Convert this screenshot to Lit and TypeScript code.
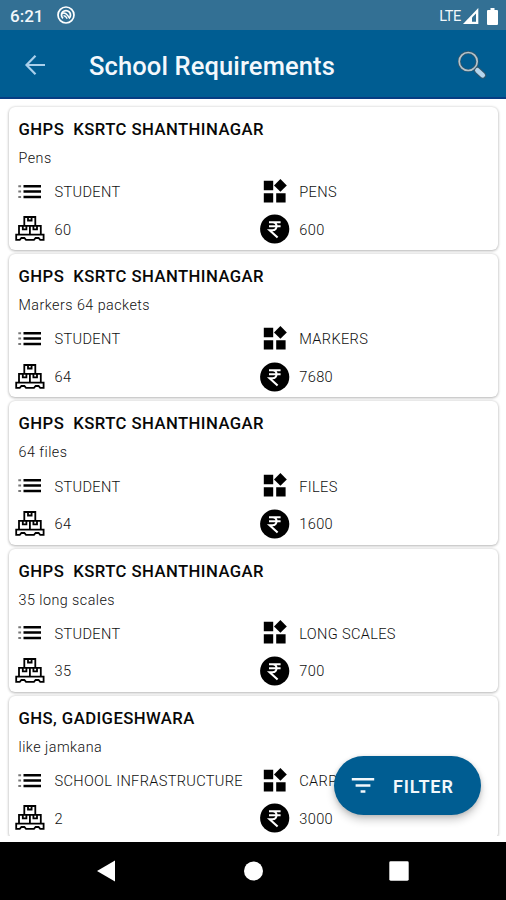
import { LitElement, html, css, svg } from "lit";
import { customElement, property } from "lit/decorators.js";

interface Requirement {
  school: string;
  note: string;
  category: string;
  item: string;
  quantity: number;
  cost: number;
}

const REQUIREMENTS: Requirement[] = [
  { school: "GHPS  KSRTC SHANTHINAGAR", note: "Pens", category: "STUDENT", item: "PENS", quantity: 60, cost: 600 },
  { school: "GHPS  KSRTC SHANTHINAGAR", note: "Markers 64 packets", category: "STUDENT", item: "MARKERS", quantity: 64, cost: 7680 },
  { school: "GHPS  KSRTC SHANTHINAGAR", note: "64 files", category: "STUDENT", item: "FILES", quantity: 64, cost: 1600 },
  { school: "GHPS  KSRTC SHANTHINAGAR", note: "35 long scales", category: "STUDENT", item: "LONG SCALES", quantity: 35, cost: 700 },
  { school: "GHS, GADIGESHWARA", note: "like jamkana", category: "SCHOOL INFRASTRUCTURE", item: "CARPET", quantity: 2, cost: 3000 },
];

const icon = (w: number, h: number, body: unknown) =>
  html`<svg width=${w} height=${h} viewBox="0 0 ${w} ${h}" fill="none">${body}</svg>`;

const listIcon = icon(30, 30, svg`
  <path d="M3.3 9.2h2.8M3.3 14.6h2.8M3.3 20h2.8" stroke="#777" stroke-width="2"/>
  <path d="M8.5 9.2H26M8.5 14.6H26M8.5 20H26" stroke="#000" stroke-width="2.5"/>`);

const palletIcon = icon(30, 30, svg`
  <g stroke="#000" stroke-width="1.8">
    <path d="M9.3 11V3h11v8M13 3v3.5h3.6V3"/>
    <path d="M4 20V11.8h21.8V20M14.9 11.8V20M7.8 11.8v3.6h3.6v-3.6M18.4 11.8v3.6H22v-3.6"/>
    <path d="M1.2 20.6h27.4v5.2h-3.4L23.6 24h-3L19 25.800h-8L9.400 24h-3l-1.600 1.800H1.200z"/>
  </g>`);

const widgetsIcon = icon(30, 30, svg`
  <g fill="#000">
    <path d="M3.8 3.8h9.4v9.4H3.8zM3.8 16.2h9.4v9.4H3.8zM16.2 16.2h9.4v9.4h-9.4z"/>
    <path d="M20.4 2l6.4 6.4-6.4 6.4L14 8.400z"/>
  </g>`);

const rupeeIcon = icon(30, 30, svg`
  <circle cx="14.7" cy="15" r="14.6" fill="#000"/>
  <path d="M9 8.300h11.600M9 12.200h11.600M9 8.300h3.500c5.400 0 5.400 7.900 0 7.900H9.600l8 7.400" stroke="#fff" stroke-width="2.1"/>`);

@customElement("requirement-card")
export class RequirementCard extends LitElement {
  @property({ attribute: false }) data!: Requirement;

  static styles = css`
    :host {
      display: block;
      box-sizing: border-box;
      height: 143.2px;
      padding: 12px 0 0 6px;
      border-radius: 6px;
      background: #fff;
      box-shadow: 0 1px 3px rgba(0, 0, 0, 0.24), 0 0 3px rgba(0, 0, 0, 0.14);
      white-space: pre;
    }
    .school {
      padding-left: 3.5px;
      font-size: 16.7px;
      font-weight: 500;
      line-height: 22px;
      letter-spacing: 0.43px;
      color: #080808;
    }
    .note {
      padding-left: 3.5px;
      margin-top: 7px;
      font-size: 14.3px;
      font-weight: 300;
      line-height: 20px;
      letter-spacing: 0.47px;
      color: #101010;
    }
    .facts {
      display: grid;
      grid-template-columns: 244.8px 1fr;
      grid-auto-rows: 37.6px;
      align-items: center;
      margin-top: 5px;
    }
    .fact {
      display: flex;
      align-items: center;
      gap: 9.5px;
      font-size: 14.6px;
      font-weight: 300;
      letter-spacing: 0.32px;
      color: #101010;
    }
    .fact span {
      padding-top: 1px;
    }
    svg {
      display: block;
      flex: none;
    }
  `;

  render() {
    const d = this.data;
    return html`<div class="school">${d.school}</div><div class="note">${d.note}</div><div class="facts"
      ><div class="fact">${listIcon}<span>${d.category}</span></div
      ><div class="fact">${widgetsIcon}<span>${d.item}</span></div
      ><div class="fact">${palletIcon}<span>${d.quantity}</span></div
      ><div class="fact">${rupeeIcon}<span>${d.cost}</span></div
    ></div>`;
  }
}

@customElement("app-root")
export class AppRoot extends LitElement {
  static styles = css`
    :host {
      position: relative;
      display: flex;
      flex-direction: column;
      width: 506px;
      height: 900px;
      overflow: hidden;
      background: #fff;
      font-family: Roboto, "Liberation Sans", sans-serif;
    }
    svg {
      display: block;
      flex: none;
    }
    .status {
      display: flex;
      align-items: center;
      box-sizing: border-box;
      height: 30px;
      padding: 2px 8px 0 10px;
      background: #337094;
      color: #f2f7fa;
    }
    .clock {
      width: 46px;
      font-size: 17px;
      font-weight: 500;
    }
    .network {
      margin-left: auto;
      margin-right: 2px;
      font-size: 14.5px;
      letter-spacing: -0.3px;
    }
    .battery {
      margin-left: 8px;
    }
    .appbar {
      display: flex;
      align-items: center;
      box-sizing: border-box;
      height: 69px;
      padding: 2px 18px 0 24px;
      border-bottom: 2px solid #073d83;
      background: #005d92;
    }
    .title {
      flex: 1;
      margin: 3px 0 0 43px;
      font-size: 25.5px;
      font-weight: 500;
      line-height: 32px;
      letter-spacing: 0.12px;
      color: #f4f8fc;
    }
    .list {
      display: flex;
      flex-direction: column;
      gap: 4px;
      box-sizing: border-box;
      height: 737px;
      padding: 8px 8px 0 9px;
      overflow: hidden;
    }
    requirement-card {
      flex: none;
    }
    .nav {
      display: flex;
      align-items: center;
      justify-content: space-between;
      box-sizing: border-box;
      height: 58px;
      margin-top: auto;
      padding: 0 97px 0 96px;
      background: #000;
    }
    .filter {
      position: absolute;
      right: 25px;
      bottom: 85px;
      display: flex;
      align-items: center;
      gap: 18px;
      box-sizing: border-box;
      width: 147px;
      height: 59px;
      padding: 1px 0 0 17px;
      border: 0;
      border-radius: 30px;
      background: #005d92;
      color: #f2f7fb;
      font: 600 18px Roboto, "Liberation Sans", sans-serif;
      letter-spacing: 0.9px;
      box-shadow: 0 5px 8px rgba(0, 0, 0, 0.2), 0 1px 4px rgba(0, 0, 0, 0.14);
    }
  `;

  render() {
    return html`
      <div class="status">
        <span class="clock">6:21</span>
        ${icon(20, 20, svg`
          <circle cx="10" cy="9" r="8" stroke="#fff" stroke-width="1.7"/>
          <path d="M7 12.400a4.500 4.500 0 1 1 6 0" stroke="#fff" stroke-width="1.8"/>
          <path d="M6 7.500c3-1.300 4.500.2 7.800 4.700M7.600 9.800c1.500-.2 2.500 1 3.600 2.800" stroke="#fff" stroke-width="1.500"/>`)}
        <span class="network">LTE</span>
        ${icon(16, 16, svg`
          <path d="M15.3 0v16H0z" fill="#fff"/>
          <path d="M13 5.500v8.200H9V9.500z" fill="#337094"/>`)}
        <svg class="battery" width="11" height="17" viewBox="0 0 11 17">
          <path d="M3.5 0h4v2H10a1 1 0 0 1 1 1v13a1 1 0 0 1-1 1H1a1 1 0 0 1-1-1V3a1 1 0 0 1 1-1h2.5z" fill="#fff"/>
        </svg>
      </div>
      <div class="appbar">
        ${icon(22, 22, svg`<path d="M21 11H3M11.5 1.800L2.500 11l9 9.200" stroke="#a9cfeb" stroke-width="2.2"/>`)}
        <div class="title">School Requirements</div>
        ${icon(30, 30, svg`
          <circle cx="10.200" cy="11.500" r="9" stroke="#36576b" stroke-width="3.2"/>
          <circle cx="10.200" cy="11.500" r="9" stroke="#b4c4cc" stroke-width="1.700"/>
          <path d="M16.600 17.600l3 3" stroke="#b4c4cc" stroke-width="2"/>
          <path d="M19.500 20.400l5.200 4.800" stroke="#36576b" stroke-width="6.800" stroke-linecap="round"/>
          <path d="M19.500 20.400l5.200 4.800" stroke="#b5d6ee" stroke-width="4.800" stroke-linecap="round"/>`)}
      </div>
      <div class="list">
        ${REQUIREMENTS.map((r) => html`<requirement-card .data=${r}></requirement-card>`)}
      </div>
      <div class="nav">
        ${icon(20, 22, svg`<path d="M19 .5v21L1 11z" fill="#fff"/>`)}
        ${icon(20, 20, svg`<circle cx="10.5" cy="10" r="9.5" fill="#fff"/>`)}
        ${icon(20, 20, svg`<rect x=".3" y=".3" width="19.4" height="19.4" rx="1.4" fill="#fff"/>`)}
      </div>
      <button class="filter">
        ${icon(24, 18, svg`<path d="M.8 2.200h22.400M4.600 8.400h14.800M9.600 14.400h4.800" stroke="#f2f7fb" stroke-width="2.500"/>`)}
        <span>FILTER</span>
      </button>
    `;
  }
}
